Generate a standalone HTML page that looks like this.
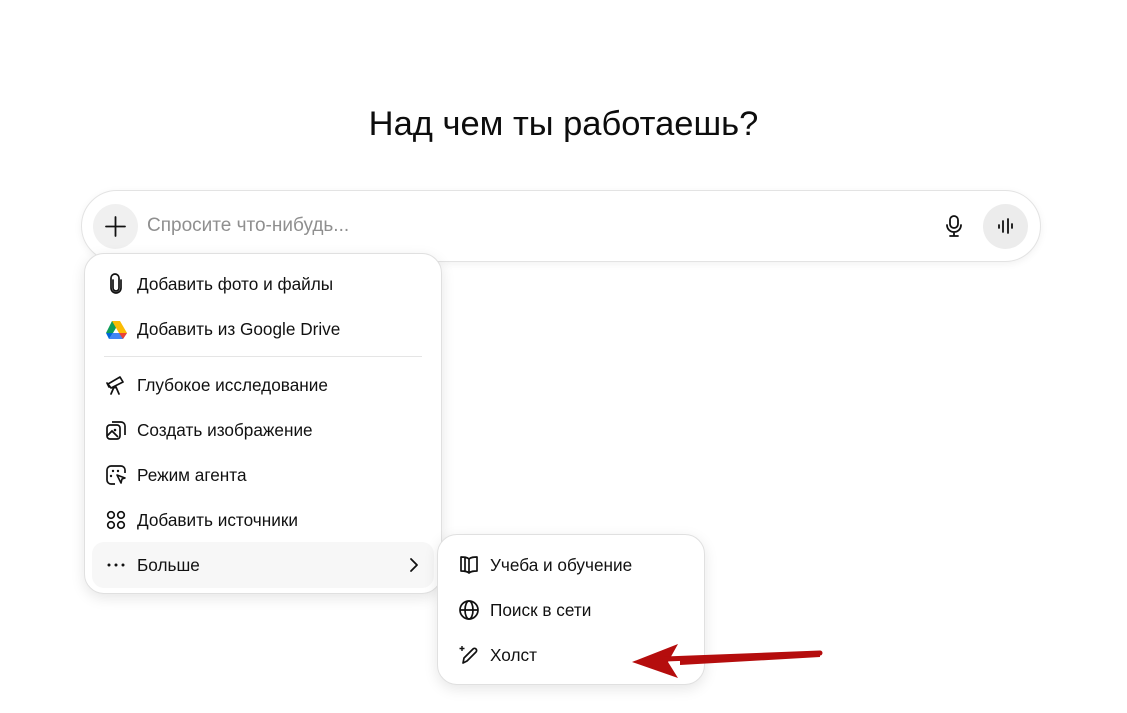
<!DOCTYPE html>
<html><head><meta charset="utf-8"><style>
*{margin:0;padding:0;box-sizing:border-box}
body{width:1127px;height:713px;background:#fff;font-family:"Liberation Sans","Noto Sans CJK SC",sans-serif;color:#0d0d0d;position:relative;overflow:hidden}
.title{position:absolute;top:105px;left:0;width:1127px;text-align:center;font-size:34.5px;color:#0d0d0d}
.input{position:absolute;left:81px;top:190px;width:960px;height:72px;border:1px solid #e3e3e3;border-radius:36px;box-shadow:0 2px 8px rgba(0,0,0,.06);background:#fff}
.plus{position:absolute;left:93px;top:204px;width:45px;height:45px;border-radius:50%;background:#f0f0f0}
.ph{position:absolute;left:147px;top:215px;font-size:19px;color:#8f8f8f}
.voice{position:absolute;left:983px;top:204px;width:45px;height:45px;border-radius:50%;background:#ececec}
.menu{position:absolute;background:#fff;border:1px solid #e0e0e0;border-radius:20px;box-shadow:0 4px 14px rgba(0,0,0,.1)}
.it{position:absolute;font-size:17.2px;color:#111;height:20px;line-height:20px}
.ic{position:absolute;width:22px;height:22px}
svg{display:block}
</style></head><body>
<div class="title">Над чем ты работаешь?</div>
<div class="input"></div>
<div class="plus"><svg width="45" height="45"><path d="M22.5 13v19M13 22.5h19" stroke="#111" stroke-width="1.8" stroke-linecap="round"/></svg></div>
<div class="ph">Спросите что-нибудь...</div>
<svg style="position:absolute;left:943px;top:214px" width="22" height="24" viewBox="0 0 22 24"><rect x="7" y="2" width="8" height="12" rx="4" fill="none" stroke="#111" stroke-width="1.8"/><path d="M4 11a7 7 0 0 0 14 0M11 18v4M7 22h8" fill="none" stroke="#111" stroke-width="1.8" stroke-linecap="round"/></svg>
<div class="voice"><svg width="45" height="45"><path d="M16 21v3M20 17v11M25 15v14M29 20v4" stroke="#111" stroke-width="1.8" stroke-linecap="round"/></svg></div>

<div class="menu" style="left:84px;top:253px;width:358px;height:341px"></div>
<div style="position:absolute;left:92px;top:542px;width:342px;height:46px;background:#f7f7f7;border-radius:12px"></div>
<div style="position:absolute;left:104px;top:356px;width:318px;height:1px;background:#e5e5e5"></div>

<svg class="ic" style="left:105px;top:273px" viewBox="0 0 22 22"><path d="M8 7v8a3 3 0 0 0 6 0V5a4 4 0 0 0-8 0v10a5 5 0 0 0 10 0V7" fill="none" stroke="#111" stroke-width="1.7" stroke-linecap="round"/></svg>
<div class="it" style="left:137px;top:274px">Добавить фото и файлы</div>
<svg class="ic" style="left:105px;top:318px" viewBox="0 0 22 22"><path d="M7 3h8l-7 12H1z" fill="#0f9d58"/><path d="M15 3l7 12h-8L7 3z" fill="#fbbc04"/><path d="M8 15h14l-4 6H4z" fill="#4285f4"/><path d="M1 15l3 6 4-6z" fill="#0066da"/><path d="M14 15h8l-4 6z" fill="#ea4335"/></svg>
<div class="it" style="left:137px;top:319px">Добавить из Google Drive</div>
<svg class="ic" style="left:105px;top:374px" viewBox="0 0 22 22"><path d="M3 10l12-7 3 5-12 6zM9 13l-3 7M11 13l3 7M2 9l2 4" fill="none" stroke="#111" stroke-width="1.7" stroke-linejoin="round" stroke-linecap="round"/><circle cx="10" cy="13" r="1.5" fill="#111"/></svg>
<div class="it" style="left:137px;top:375px">Глубокое исследование</div>
<svg class="ic" style="left:105px;top:419px" viewBox="0 0 22 22"><rect x="2" y="6" width="13" height="14" rx="3" fill="none" stroke="#111" stroke-width="1.7"/><path d="M7 3h9a4 4 0 0 1 4 4v9M2 17l5-5 6 6" fill="none" stroke="#111" stroke-width="1.7"/><circle cx="10" cy="11" r="1.3" fill="#111"/></svg>
<div class="it" style="left:137px;top:420px">Создать изображение</div>
<svg class="ic" style="left:105px;top:464px" viewBox="0 0 22 22"><path d="M10 20H6a4 4 0 0 1-4-4V6a4 4 0 0 1 4-4h10a4 4 0 0 1 4 4v3" fill="none" stroke="#111" stroke-width="1.7"/><path d="M12 11l8 3-3 1-1 4z" fill="none" stroke="#111" stroke-width="1.6" stroke-linejoin="round"/><circle cx="8" cy="7" r="1.2" fill="#111"/><circle cx="13" cy="7" r="1.2" fill="#111"/><circle cx="6" cy="12" r="1.2" fill="#111"/></svg>
<div class="it" style="left:137px;top:465px">Режим агента</div>
<svg class="ic" style="left:105px;top:509px" viewBox="0 0 22 22"><g fill="none" stroke="#111" stroke-width="1.7"><circle cx="6" cy="6" r="3.3"/><circle cx="16" cy="6" r="3.3"/><circle cx="6" cy="16" r="3.3"/><circle cx="16" cy="16" r="3.3"/></g></svg>
<div class="it" style="left:137px;top:510px">Добавить источники</div>
<svg class="ic" style="left:105px;top:554px" viewBox="0 0 22 22"><circle cx="4" cy="11" r="1.5" fill="#111"/><circle cx="11" cy="11" r="1.5" fill="#111"/><circle cx="18" cy="11" r="1.5" fill="#111"/></svg>
<div class="it" style="left:137px;top:555px">Больше</div>
<svg class="ic" style="left:403px;top:554px" viewBox="0 0 22 22"><path d="M8 5l6 6-6 6" fill="none" stroke="#111" stroke-width="1.8" stroke-linecap="round" stroke-linejoin="round"/></svg>

<div class="menu" style="left:437px;top:534px;width:268px;height:151px"></div>
<svg class="ic" style="left:458px;top:554px" viewBox="0 0 22 22"><path d="M11 5c-2-2-5-2-8-2v14c3 0 6 0 8 2 2-2 5-2 8-2V3c-3 0-6 0-8 2zM11 5v14M7 4v13" fill="none" stroke="#111" stroke-width="1.7" stroke-linejoin="round"/></svg>
<div class="it" style="left:490px;top:555px">Учеба и обучение</div>
<svg class="ic" style="left:458px;top:599px" viewBox="0 0 22 22"><g fill="none" stroke="#111" stroke-width="1.7"><circle cx="11" cy="11" r="9"/><ellipse cx="11" cy="11" rx="4" ry="9"/><path d="M2 11h18"/></g></svg>
<div class="it" style="left:490px;top:600px">Поиск в сети</div>
<svg class="ic" style="left:458px;top:644px" viewBox="0 0 22 22"><path d="M5 19l1-5 9-9a2 2 0 0 1 3 3l-9 9z" fill="none" stroke="#111" stroke-width="1.7" stroke-linejoin="round"/><path d="M4 2v5M1.5 4.5h5" stroke="#111" stroke-width="1.4"/></svg>
<div class="it" style="left:490px;top:645px">Холст</div>

<svg style="position:absolute;left:620px;top:640px" width="210" height="40"><path d="M200 13L60 20L60 25L200 17z" fill="#b50d0d"/><path d="M12 22L58 4L48 22L58 38z" fill="#b50d0d"/><path d="M45 19L200 13" stroke="#b50d0d" stroke-width="5" stroke-linecap="round"/></svg>
</body></html>
